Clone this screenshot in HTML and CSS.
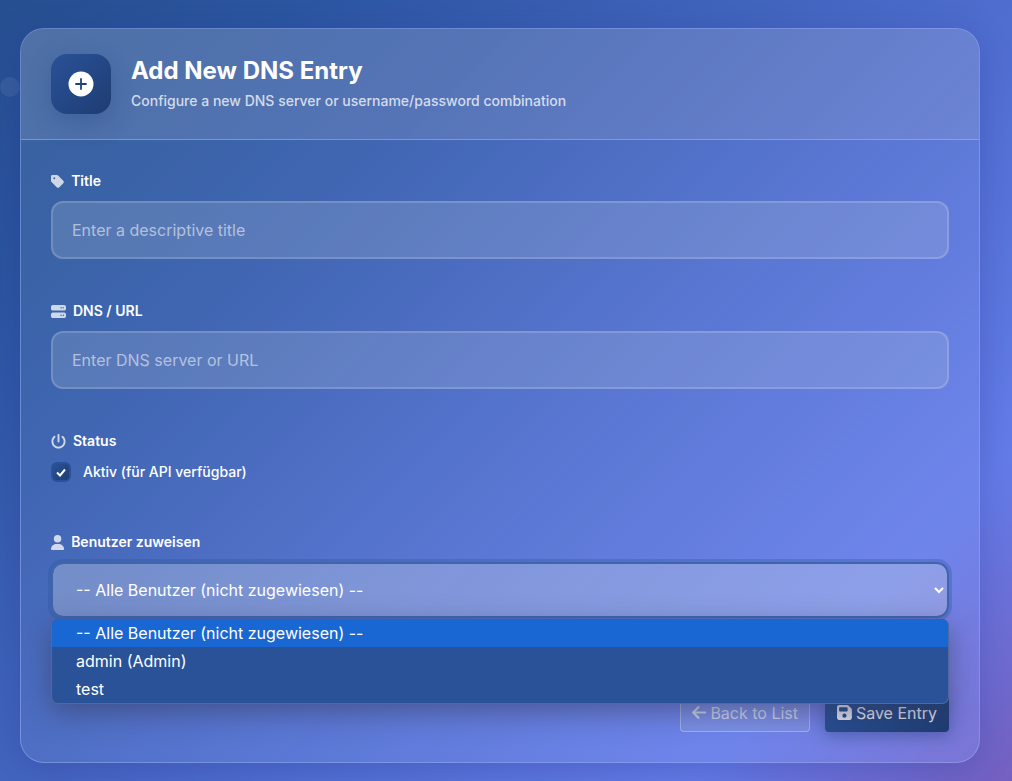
FILE: index.html
```
<!DOCTYPE html>
<html lang="de">
<head>
	<meta charset="utf-8">
	<meta name="viewport" content="width=device-width, initial-scale=1">
	<title>Add New DNS Entry</title>
	<link rel="stylesheet" href="styles.css">
</head>

<body>
<span class="particle"></span>
<div class="card">
	<div class="card-header">
		<div class="header-icon">
			<svg viewBox="0 0 26 26"><circle cx="13" cy="13" r="12.500" fill="white"/><path d="M13 8v10M8 13h10" stroke="#1f3f7d" stroke-width="1.800" stroke-linecap="round"/></svg>
		</div>
		<div>
			<h1 class="title">Add New DNS Entry</h1>
			<p class="subtitle">Configure a new DNS server or username/password combination</p>
		</div>
	</div>
	<form class="card-body">
		<div class="form-group">
			<label class="form-label" for="title">
				<svg class="icon" viewBox="0 0 448 512"><path d="M0 80V229.500c0 17 6.700 33.300 18.700 45.300l176 176c25 25 65.500 25 90.500 0L418.700 317.300c25-25 25-65.500 0-90.500l-176-176c-12-12-28.300-18.700-45.300-18.700H48C21.500 32 0 53.500 0 80zm112 32a32 32 0 1 1 0 64 32 32 0 1 1 0-64z"/></svg>
				Title
			</label>
			<input type="text" class="form-control" id="title" placeholder="Enter a descriptive title">
		</div>
		<div class="form-group">
			<label class="form-label" for="dns">
				<svg class="icon" viewBox="0 0 512 512"><path d="M64 32C28.700 32 0 60.700 0 96v64c0 35.300 28.700 64 64 64H448c35.300 0 64-28.700 64-64V96c0-35.300-28.700-64-64-64H64zm280 72a24 24 0 1 1 0 48 24 24 0 1 1 0-48zm48 24a24 24 0 1 1 48 0 24 24 0 1 1-48 0zM64 288c-35.300 0-64 28.700-64 64v64c0 35.300 28.700 64 64 64H448c35.300 0 64-28.700 64-64V352c0-35.300-28.700-64-64-64H64zm280 72a24 24 0 1 1 0 48 24 24 0 1 1 0-48zm56 24a24 24 0 1 1 48 0 24 24 0 1 1-48 0z"/></svg>
				DNS / URL
			</label>
			<input type="text" class="form-control" id="dns" placeholder="Enter DNS server or URL">
		</div>
		<div class="form-group form-group-status">
			<div class="form-label">
				<svg class="icon" viewBox="0 0 512 512"><path d="M288 32c0-17.700-14.300-32-32-32s-32 14.300-32 32V256c0 17.700 14.300 32 32 32s32-14.300 32-32V32zM143.500 120.600c13.600-11.300 15.400-31.500 4.100-45.100s-31.500-15.400-45.100-4.100C49.700 115.400 16 181.800 16 256c0 132.500 107.500 240 240 240s240-107.500 240-240c0-74.200-33.800-140.600-86.600-184.600c-13.600-11.300-33.800-9.400-45.100 4.100s-9.400 33.800 4.100 45.100c38.900 32.300 63.500 81 63.500 135.400c0 97.200-78.800 176-176 176s-176-78.800-176-176c0-54.400 24.700-103.100 63.500-135.400z"/></svg>
				Status
			</div>
			<div class="check-row">
				<input type="checkbox" class="check" id="aktiv" checked>
				<label for="aktiv">Aktiv (für API verfügbar)</label>
			</div>
		</div>
		<div class="form-group form-group-user">
			<label class="form-label" for="user">
				<svg class="icon" viewBox="0 0 448 512"><path d="M224 256A128 128 0 1 0 224 0a128 128 0 1 0 0 256zm-45.700 48C79.800 304 0 383.800 0 482.300C0 498.700 13.300 512 29.700 512H418.300c16.400 0 29.700-13.300 29.700-29.700C448 383.800 368.200 304 269.700 304H178.300z"/></svg>
				Benutzer zuweisen
			</label>
			<div class="select-wrap">
				<select class="form-control form-select" id="user">
					<option>-- Alle Benutzer (nicht zugewiesen) --</option>
					<option>admin (Admin)</option>
					<option>test</option>
				</select>
				<ul class="options" role="listbox">
					<li class="option option-active" role="option">-- Alle Benutzer (nicht zugewiesen) --</li>
					<li class="option" role="option">admin (Admin)</li>
					<li class="option" role="option">test</li>
				</ul>
			</div>
		</div>
		<div class="actions">
			<a class="btn btn-back" href="#">
				<svg class="btn-icon" viewBox="0 0 448 512"><path d="M9.400 233.400c-12.500 12.500-12.500 32.800 0 45.300l160 160c12.500 12.500 32.800 12.500 45.300 0s12.500-32.800 0-45.300L109.200 288 416 288c17.700 0 32-14.300 32-32s-14.300-32-32-32l-306.700 0L214.600 118.600c12.500-12.500 12.500-32.800 0-45.300s-32.800-12.500-45.300 0l-160 160z"/></svg>
				Back to List
			</a>
			<button type="button" class="btn btn-save">
				<svg class="btn-icon" viewBox="0 0 448 512"><path d="M64 32C28.700 32 0 60.700 0 96V416c0 35.300 28.700 64 64 64H384c35.300 0 64-28.700 64-64V173.300c0-17-6.700-33.300-18.700-45.300L352 50.700C340 38.700 323.700 32 306.700 32H64zm0 96c0-17.700 14.300-32 32-32H288c17.700 0 32 14.300 32 32v64c0 17.700-14.300 32-32 32H96c-17.700 0-32-14.300-32-32V128zM224 288a64 64 0 1 1 0 128 64 64 0 1 1 0-128z"/></svg>
				Save Entry
			</button>
		</div>
	</form>
</div>
</body>
</html>
```
FILE: styles.css
```
* {
	box-sizing: border-box;
}
body {
	margin: 0;
	min-height: 100vh;
	padding: 28px 32px 18px 20px;
	font-family: Inter, "Liberation Sans", sans-serif;
	color: white;
	background: linear-gradient(135deg, #264f90 0%, #2c56a2 18%, #4365bf 44%, #4e6dce 56%, #647ce8 82%, #7560c0 100%);
}
.particle {
	position: absolute;
	left: 0;
	top: 77px;
	width: 20px;
	height: 20px;
	border-radius: 50%;
	background: rgba(255, 255, 255, 0.07);
}
.card {
	position: relative;
	border: 1px solid rgba(170, 190, 255, 0.4);
	border-radius: 24px;
	background: linear-gradient(135deg, rgba(120, 160, 190, 0.22) 0%, rgba(130, 160, 210, 0.15) 30%, rgba(150, 165, 255, 0.25) 100%);
	box-shadow: 0 8px 32px rgba(31, 38, 135, 0.25);
}
.card-header {
	display: flex;
	align-items: center;
	gap: 20px;
	padding: 25px 30px;
	border-bottom: 1px solid rgba(160, 185, 255, 0.5);
	border-radius: 23px 23px 0 0;
	background: rgba(160, 170, 200, 0.22);
}
.header-icon {
	display: flex;
	align-items: center;
	justify-content: center;
	width: 60px;
	height: 60px;
	border-radius: 16px;
	background: linear-gradient(135deg, #2a5298, #1e3c72);
	box-shadow: 0 8px 24px rgba(30, 60, 114, 0.3);
}
.header-icon svg {
	width: 26px;
	height: 26px;
}
.title {
	margin: 0 0 4px;
	font-size: 24px;
	line-height: 30px;
	font-weight: 700;
}
.subtitle {
	margin: 0;
	font-size: 14px;
	line-height: 22px;
	font-weight: 500;
	color: rgba(255, 255, 255, 0.75);
}
.card-body {
	padding: 31px 30px 30px;
}
.form-group {
	margin-bottom: 42px;
}
.form-group-status {
	margin-bottom: 50px;
}
.form-group-user {
	margin-bottom: 76px;
}
.form-label {
	display: flex;
	align-items: center;
	gap: 7px;
	margin-bottom: 10px;
	font-size: 14px;
	line-height: 20px;
	font-weight: 600;
}
.icon {
	height: 15px;
	fill: rgba(255, 255, 255, 0.75);
}
.form-control {
	display: block;
	width: 100%;
	height: 58px;
	padding: 0 19px;
	border: 2px solid rgba(255, 255, 255, 0.16);
	border-radius: 12px;
	background: rgba(180, 195, 215, 0.22);
	color: white;
	font-family: inherit;
	font-size: 16px;
	font-weight: 400;
	outline: none;
}
.form-control::placeholder {
	color: rgba(255, 255, 255, 0.55);
}
.check-row {
	display: flex;
	align-items: center;
	gap: 12px;
	padding-top: 1px;
	font-size: 14px;
	line-height: 20px;
	font-weight: 500;
}
.check {
	appearance: none;
	width: 20px;
	height: 20px;
	margin: 0;
	border: 2px solid #2a5298;
	border-radius: 6px;
	background: url("data:image/svg+xml,%3Csvg xmlns='http://www.w3.org/2000/svg' viewBox='0 0 16 16'%3E%3Cpath d='M4 8.500l3 3 5-6' fill='none' stroke='white' stroke-width='2'/%3E%3C/svg%3E") center / 16px no-repeat, linear-gradient(135deg, #2a5298, #1e3c72);
}
.select-wrap {
	position: relative;
}
.form-select {
	appearance: none;
	height: 56px;
	padding: 0 23px;
	border-color: #3f66ad;
	background: url("data:image/svg+xml,%3Csvg xmlns='http://www.w3.org/2000/svg' viewBox='0 0 12 12'%3E%3Cpath d='M2 4l4 4 4-4' fill='none' stroke='white' stroke-width='2'/%3E%3C/svg%3E") right 2px center / 12px no-repeat, rgba(200, 210, 230, 0.35);
	background-clip: padding-box;
	box-shadow: 0 0 0 3px rgba(42, 82, 152, 0.3);
}
.options {
	position: absolute;
	top: 57px;
	left: 0;
	right: 0;
	z-index: 2;
	margin: 0;
	padding: 0;
	overflow: hidden;
	list-style: none;
	border: 1px solid #50699f;
	border-top: 0;
	border-radius: 7px;
	background: #2a5298;
	box-shadow: 0 8px 28px rgba(50, 50, 80, 0.5);
}
.option {
	padding: 0 24px;
	font-size: 16px;
	line-height: 28px;
}
.option-active {
	background: #1967d2;
}
.actions {
	display: flex;
	justify-content: flex-end;
	gap: 15px;
}
.btn {
	display: flex;
	align-items: center;
	gap: 4px;
	height: 38px;
	padding: 0 11px 1px;
	border: 1px solid transparent;
	border-radius: 4px;
	font-family: inherit;
	font-size: 16px;
	color: #e0e3ee;
	text-decoration: none;
}
.btn-icon {
	height: 17px;
	fill: currentColor;
}
.btn-back {
	border-color: rgba(255, 255, 255, 0.3);
	background: rgba(170, 180, 215, 0.22);
	color: #ced5ee;
}
.btn-save {
	background: linear-gradient(135deg, #2a5298, #1e3c72) border-box;
	box-shadow: 0 4px 15px rgba(30, 60, 114, 0.4);
}
```
